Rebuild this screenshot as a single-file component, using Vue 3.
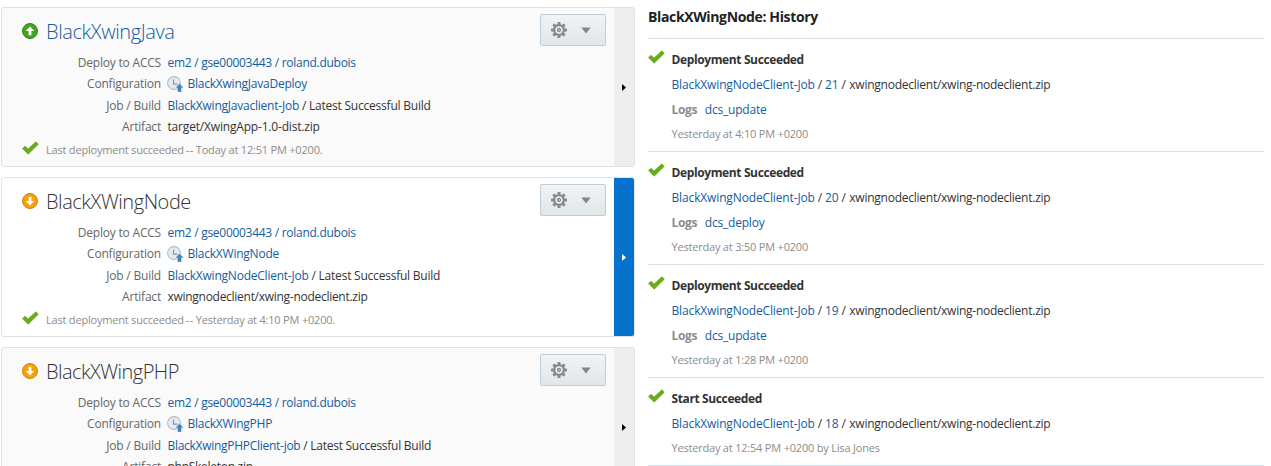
<script setup>
const cards = [
  { name: 'BlackXwingJava', up: true, link: true, config: 'BlackXwingJavaDeploy', job: 'BlackXwingJavaclient-Job', artifact: 'target/XwingApp-1.0-dist.zip', deployed: 'Today at 12:51 PM +0200.' },
  { name: 'BlackXWingNode', selected: true, config: 'BlackXWingNode', job: 'BlackXwingNodeClient-Job', artifact: 'xwingnodeclient/xwing-nodeclient.zip', deployed: 'Yesterday at 4:10 PM +0200.' },
  { name: 'BlackXWingPHP', tight: true, config: 'BlackXWingPHP', job: 'BlackXwingPHPClient-job', artifact: 'phpSkeleton.zip' },
]
const history = [
  { title: 'Deployment Succeeded', build: 21, log: 'dcs_update', time: 'Yesterday at 4:10 PM +0200' },
  { title: 'Deployment Succeeded', build: 20, log: 'dcs_deploy', time: 'Yesterday at 3:50 PM +0200' },
  { title: 'Deployment Succeeded', build: 19, log: 'dcs_update', time: 'Yesterday at 1:28 PM +0200' },
  { title: 'Start Succeeded', build: 18, time: 'Yesterday at 12:54 PM +0200 by Lisa Jones' },
]
</script>

<template>
  <main class="page">
    <section class="cards">
      <article v-for="c in cards" :key="c.name" class="card" :class="{ selected: c.selected, tight: c.tight, running: c.up }">
        <div class="body">
          <header class="head">
            <svg class="state" viewBox="0 0 16 16" width="16" height="16">
              <circle cx="8" cy="8" r="7.5" :fill="c.up ? '#45a321' : '#f7a10a'" :stroke="c.up ? '#2f8a12' : '#cf850c'" />
              <path d="M8 3.4 12.3 8H9.4V12.2H6.6V8H3.7Z" fill="#fff" :transform="c.up ? null : 'rotate(180 8 8)'" />
            </svg>
            <h2 :class="{ link: c.link }">{{ c.name }}</h2>
            <button class="gear">
              <svg width="16" height="16" viewBox="0 0 16 16">
                <g fill="#858b90">
                  <rect v-for="a in [0, 45, 90, 135]" :key="a" x="6.5" y="0" width="3" height="16" rx=".5" :transform="`rotate(${a} 8 8)`" />
                  <circle cx="8" cy="8" r="6" />
                </g>
                <circle cx="8" cy="8" r="2.9" fill="none" stroke="#e9edef" stroke-width="1.5" />
                <circle cx="8" cy="8" r=".7" fill="#e9edef" />
              </svg>
              <svg class="caret" width="10" height="7" viewBox="0 0 10 7"><path d="M.3.5h9.4L5 6.6Z" fill="#80868c" /></svg>
            </button>
          </header>
          <dl>
            <dt>Deploy to ACCS</dt>
            <dd><a class="target">em2 / gse00003443 / roland.dubois</a></dd>
            <dt>Configuration</dt>
            <dd>
              <svg class="clock" width="17" height="17" viewBox="0 0 17 17">
                <circle cx="7" cy="7" r="6.4" fill="#e4eaf1" stroke="#b4bdc6" stroke-width="1.1" />
                <path d="M6.5 3.5v4.7h4" fill="none" stroke="#8c98a5" stroke-width="1.2" />
                <path d="M12.5 7.4 16.6 11.8H14.5V16H10.5V11.8H8.4Z" fill="#3f86bd" stroke="#fff" stroke-width=".3" />
              </svg>
              <a class="config">{{ c.config }}</a>
            </dd>
            <dt>Job / Build</dt>
            <dd><a class="job">{{ c.job }}</a><span class="build"> / Latest Successful Build</span></dd>
            <dt>Artifact</dt>
            <dd class="artifact">{{ c.artifact }}</dd>
          </dl>
          <footer v-if="c.deployed">
            <svg class="check" width="17" height="14" viewBox="0 0 17 14"><path d="M.5 7.6 3 5.2 6.1 8 13.8.8 16.3 3.2 6.2 13.2Z" fill="#68ae18" stroke="#579d14" stroke-width=".6" /></svg>
            <span>Last deployment succeeded <i>--</i> {{ c.deployed }}</span>
          </footer>
        </div>
        <div class="rail"><svg width="4" height="7" viewBox="0 0 4 7"><path d="M0 0 4 3.5 0 7Z" fill="currentColor" /></svg></div>
      </article>
    </section>
    <section class="history">
      <h3>BlackXWingNode: History</h3>
      <article v-for="h in history" :key="h.build" class="event">
        <svg class="check" width="17" height="14" viewBox="0 0 17 14"><path d="M.5 7.6 3 5.2 6.1 8 13.8.8 16.3 3.2 6.2 13.2Z" fill="#68ae18" stroke="#579d14" stroke-width=".6" /></svg>
        <div>
          <p class="title">{{ h.title }}</p>
          <p class="path"><a>BlackXwingNodeClient-Job</a> / <a>{{ h.build }}</a> / <span class="artifact">xwingnodeclient/xwing-nodeclient.zip</span></p>
          <p v-if="h.log"><b>Logs</b><a>{{ h.log }}</a></p>
          <p class="time">{{ h.time }}</p>
        </div>
      </article>
    </section>
  </main>
</template>

<style>
body { margin: 0; background: #fff; overflow: hidden; }
</style>

<style scoped>
* { box-sizing: border-box; }
.page { display: flex; height: 466px; overflow: hidden; font: 12px/21px "Open Sans", "Noto Sans", sans-serif; letter-spacing: -0.2px; color: #333; }
h2, h3, p, dl, dd { margin: 0; }
svg { display: block; flex: none; }
a, .link { color: #145c9e; }
.cards { width: 635px; padding: 7px 0 0 1px; flex: none; }
.card { display: flex; height: 160px; margin-bottom: 10px; border: 1px solid #dfe1e2; border-radius: 3px; background: #fafafa; overflow: hidden; }
.card.selected { background: #fff; }
.body { flex: 1; padding: 6px 8px 0 20px; }
.head { display: flex; height: 38px; }
.state { margin-top: 9px; }
h2 { flex: 1; margin-left: 8px; font-size: 20px; line-height: 36px; font-weight: 300; letter-spacing: -0.45px; color: #333; }
h2.link { color: #145c9e; letter-spacing: -0.4px; }
.tight h2 { letter-spacing: -0.55px; }
.gear { display: flex; align-items: center; width: 66px; height: 32px; padding: 0 0 0 10px; border: 1px solid #c0ccd6; border-radius: 2px; background: linear-gradient(#f1f3f4, #e1e6e9); }
.caret { margin: 1px 0 0 14px; }
dl { display: grid; grid-template-columns: 139px 1fr; column-gap: 6.5px; grid-template-rows: 21px 22px 21px 22px; }
dt { text-align: right; color: #666; }
dd { display: flex; white-space: pre; }
dd .target, dd.artifact { letter-spacing: -0.28px; }
.running dd.artifact { letter-spacing: -0.18px; }
dd .config, dd .job { letter-spacing: -0.23px; }
.tight dd .job { letter-spacing: -0.28px; }
dd .build { letter-spacing: -0.22px; }
.tight dd .build { letter-spacing: -0.26px; }
.clock { margin: 3px 4px 0 -1px; }
footer { display: flex; color: #8c8c8c; font-size: 11px; line-height: 21px; margin-top: 1px; }
footer .check { margin: 2px 7px 0 0; }
i { font-style: normal; letter-spacing: 0.6px; margin: 0 -0.8px; }
.rail { display: flex; align-items: center; width: 20px; padding-left: 8px; background: #eee; color: #000; }
.selected .rail { background: #0572ce; color: #fff; }
.history { width: 616px; margin-left: 13px; }
h3 { height: 38px; padding-top: 6px; font-size: 14px; line-height: 22px; letter-spacing: -0.36px; color: #222; }
.event { display: flex; border-top: 1px solid #d6dfe6; padding: 8px 0 5px; }
.event:last-child { border-bottom: 1px solid #d6dfe6; }
.event .check { margin: 3px 6.5px 0 0; }
p { height: 25px; line-height: 25px; white-space: nowrap; }
.title { font-weight: 700; letter-spacing: -0.38px; }
.path { letter-spacing: -0.14px; }
.path .artifact { margin-left: 0.7px; letter-spacing: -0.25px; }
b { color: #8c8c8c; font-weight: 700; letter-spacing: -0.3px; margin-right: 7.5px; }
.time { font-size: 11px; line-height: 23px; color: #8c8c8c; height: 24px; }
</style>
